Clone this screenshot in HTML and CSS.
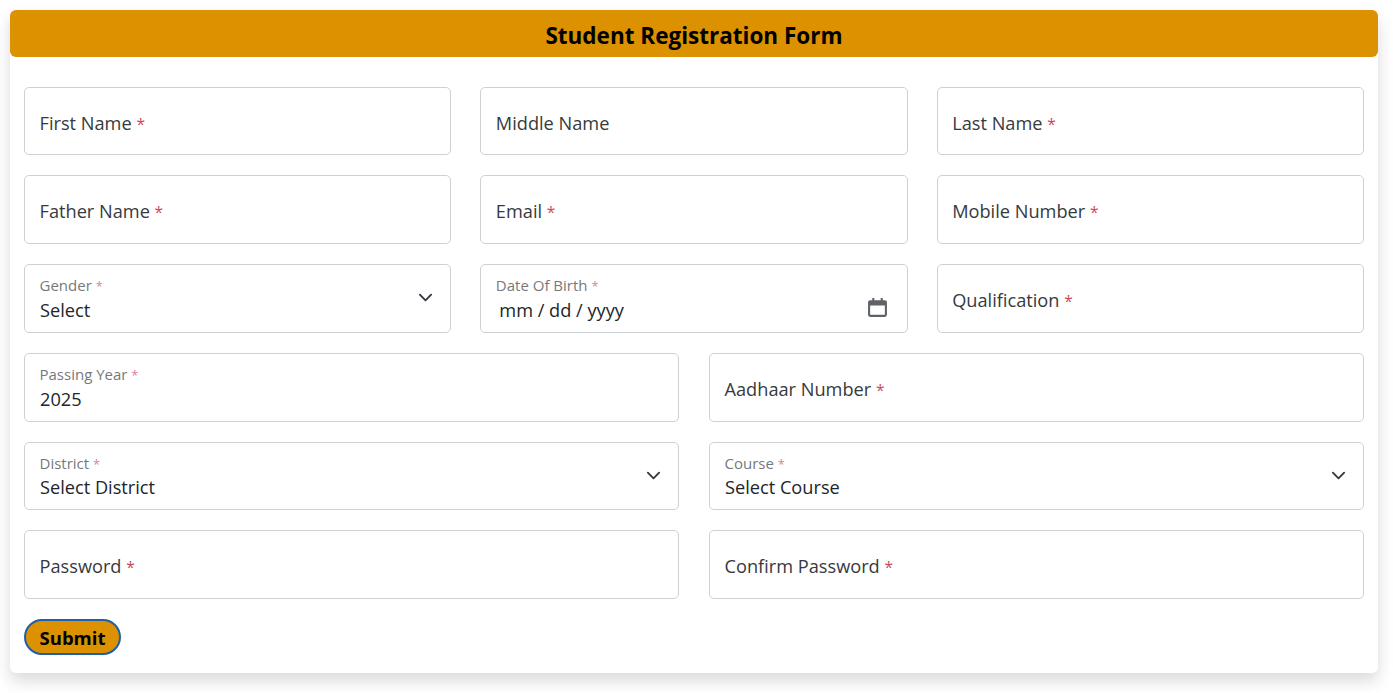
FILE: index.html
```html
<!DOCTYPE html>
<html>
<head>
    <title>Student Registration Form</title>
    <link rel="stylesheet" href="styles.css">
</head>
<body>
    <div class="card">
        <h1 class="card-header">Student Registration Form</h1>
        <form class="card-body">
            <div class="row three">
                <div class="field">
                    <input type="text" id="firstName">
                    <label for="firstName">First Name <span class="req">*</span></label>
                </div>
                <div class="field">
                    <input type="text" id="middleName">
                    <label for="middleName">Middle Name</label>
                </div>
                <div class="field">
                    <input type="text" id="lastName">
                    <label for="lastName">Last Name <span class="req">*</span></label>
                </div>
            </div>
            <div class="row three">
                <div class="field">
                    <input type="text" id="fatherName">
                    <label for="fatherName">Father Name <span class="req">*</span></label>
                </div>
                <div class="field">
                    <input type="text" id="email">
                    <label for="email">Email <span class="req">*</span></label>
                </div>
                <div class="field">
                    <input type="text" id="mobile">
                    <label for="mobile">Mobile Number <span class="req">*</span></label>
                </div>
            </div>
            <div class="row three">
                <div class="field floated">
                    <select id="gender"><option>Select</option></select>
                    <label for="gender">Gender <span class="req">*</span></label>
                    <svg class="chevron" viewBox="0 0 16 16"><path d="M2 5l6 6 6-6"/></svg>
                </div>
                <div class="field floated">
                    <input type="text" id="dob" class="date" value="mm / dd / yyyy">
                    <label for="dob">Date Of Birth <span class="req">*</span></label>
                    <svg class="calendar" viewBox="0 0 20 20"><path d="M5 1h2v2h6V1h2v2h2a2 2 0 0 1 2 2v12a2 2 0 0 1-2 2H3a2 2 0 0 1-2-2V5a2 2 0 0 1 2-2h2zM3 8v9h14V8z"/></svg>
                </div>
                <div class="field">
                    <input type="text" id="qualification">
                    <label for="qualification">Qualification <span class="req">*</span></label>
                </div>
            </div>
            <div class="row two">
                <div class="field floated">
                    <input type="text" id="passingYear" value="2025">
                    <label for="passingYear">Passing Year <span class="req">*</span></label>
                </div>
                <div class="field">
                    <input type="text" id="aadhaar">
                    <label for="aadhaar">Aadhaar Number <span class="req">*</span></label>
                </div>
            </div>
            <div class="row two">
                <div class="field floated">
                    <select id="district"><option>Select District</option></select>
                    <label for="district">District <span class="req">*</span></label>
                    <svg class="chevron" viewBox="0 0 16 16"><path d="M2 5l6 6 6-6"/></svg>
                </div>
                <div class="field floated">
                    <select id="course"><option>Select Course</option></select>
                    <label for="course">Course <span class="req">*</span></label>
                    <svg class="chevron" viewBox="0 0 16 16"><path d="M2 5l6 6 6-6"/></svg>
                </div>
            </div>
            <div class="row two">
                <div class="field">
                    <input type="password" id="password">
                    <label for="password">Password <span class="req">*</span></label>
                </div>
                <div class="field">
                    <input type="password" id="confirmPassword">
                    <label for="confirmPassword">Confirm Password <span class="req">*</span></label>
                </div>
            </div>
            <button type="button" class="submit">Submit</button>
        </form>
    </div>
</body>
</html>
```

FILE: styles.css
```css
body {
    margin: 0;
    padding: 10px 15px 20px 10px;
    background: #fff;
    font-family: "Open Sans", "Noto Sans", sans-serif;
    color: #212529;
}
.card {
    background: #fff;
    border-radius: 6px;
    box-shadow: 0 8px 16px rgba(0,0,0,0.15);
}
.card-header {
    margin: 0;
    height: 47px;
    line-height: 51px;
    background: #db9100;
    border-radius: 6px;
    text-align: center;
    font-size: 22.5px;
    font-weight: 700;
    color: #000;
}
.card-body {
    padding: 29.5px 14px 18px;
}
.row {
    display: grid;
    gap: 29px;
    margin-bottom: 20px;
}
.three {
    grid-template-columns: 1fr 1fr 1fr;
}
.two {
    grid-template-columns: 1fr 1fr;
    gap: 30px;
}
.field {
    position: relative;
    height: 68.75px;
}
.field input,
.field select {
    display: block;
    box-sizing: border-box;
    width: 100%;
    height: 100%;
    margin: 0;
    padding: 0 15px;
    background: #fff;
    border: 1px solid #cdd0d4;
    border-radius: 5px;
    font-family: inherit;
    font-size: 18.2px;
    color: #212529;
    appearance: none;
}
.field label {
    position: absolute;
    left: 15.5px;
    top: 23px;
    font-size: 18.2px;
    line-height: 26px;
    color: #212529;
    opacity: 0.9;
}
.req {
    color: #c8334a;
    font-size: 0.85em;
}
.floated input,
.floated select {
    padding-top: 23px;
}
.floated label {
    top: 11px;
    font-size: 15px;
    line-height: 21px;
    opacity: 0.62;
}
.floated .date {
    padding-left: 18px;
}
.chevron {
    position: absolute;
    right: 18px;
    top: 26px;
    width: 15px;
    height: 15px;
    fill: none;
    stroke: #343a40;
    stroke-width: 2;
    stroke-linecap: round;
    stroke-linejoin: round;
}
.calendar {
    position: absolute;
    right: 20px;
    top: 33px;
    width: 21px;
    height: 21px;
    fill: #5f6368;
}
.submit {
    display: block;
    box-sizing: border-box;
    width: 97px;
    height: 36px;
    padding: 1px 0 0;
    background: #db9100;
    border: 2px solid #1f5fa8;
    border-radius: 18px;
    font-family: inherit;
    font-size: 18.5px;
    font-weight: 700;
    color: #000;
}
```
